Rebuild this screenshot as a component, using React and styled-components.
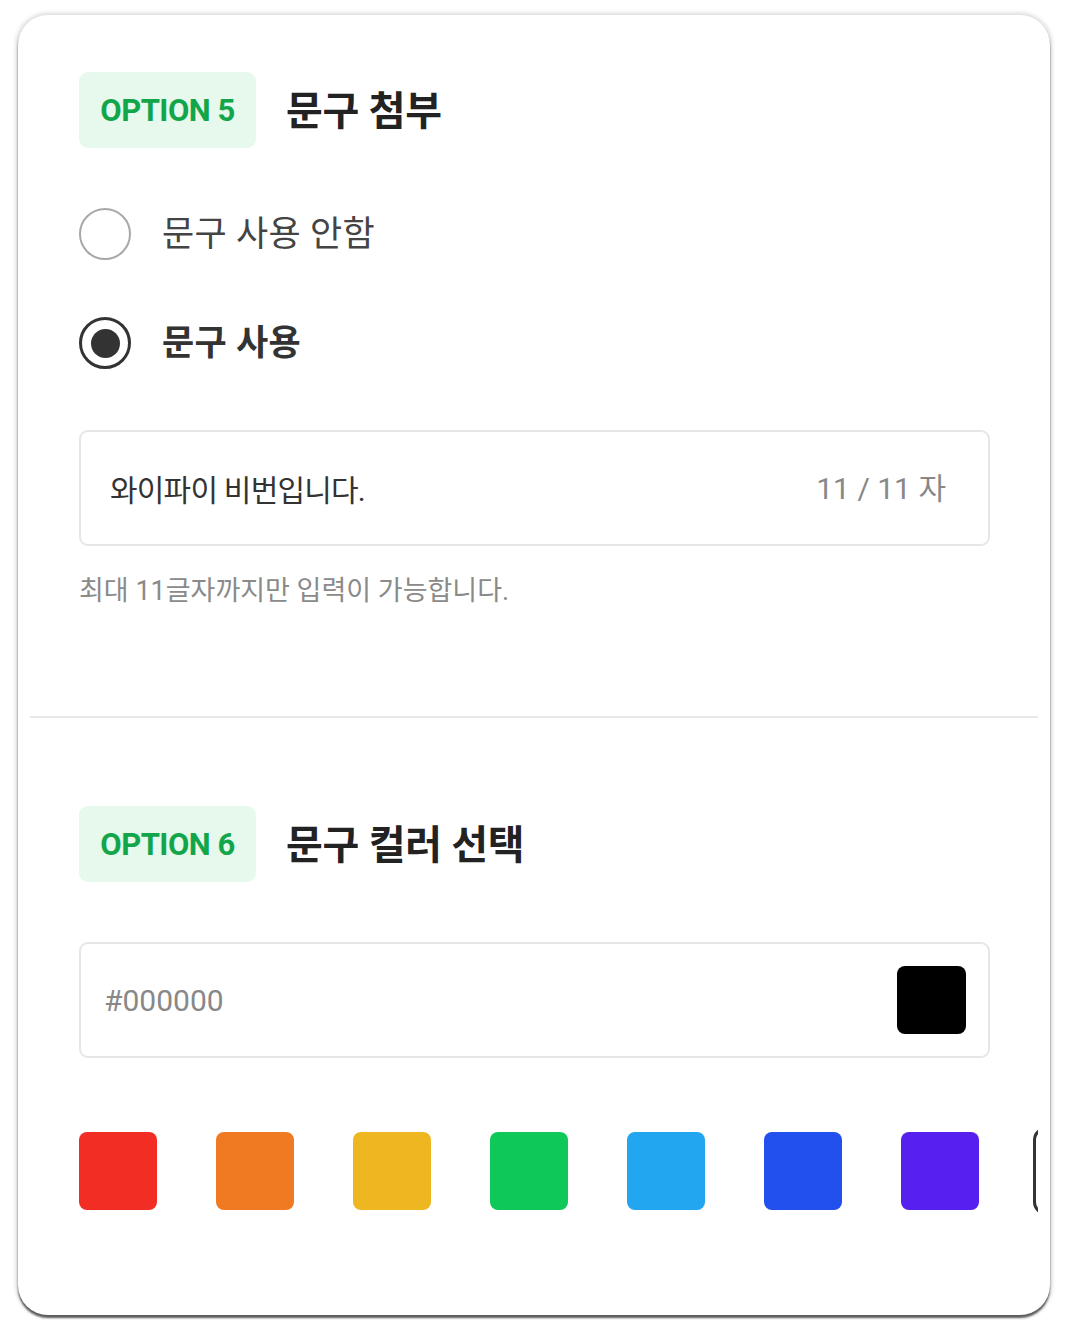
import React, { useState } from "react";
import styled, { createGlobalStyle } from "styled-components";

const GlobalStyle = createGlobalStyle`
  body {
    margin: 0;
    background: #ffffff;
    font-family: Roboto, "Noto Sans CJK KR", sans-serif;
  }
`;

const COLORS = ["#f22d24", "#f07a22", "#eeb722", "#0fc85a", "#22a6f0", "#2150ee", "#5720ee", "#000000"];
const MAX_LEN = 11;

const App = () => {
  const [useText, setUseText] = useState(true);
  const [text, setText] = useState("와이파이 비번입니다.");
  const [color, setColor] = useState("#000000");

  return (
    <Page>
      <GlobalStyle />
      <Card>
        <Section $bottom={105}>
          <Header>
            <Badge>OPTION 5</Badge>
            <Title>문구 첨부</Title>
          </Header>

          <RadioList>
            <RadioRow onClick={() => setUseText(false)}>
              <Radio $checked={!useText} />
              <RadioLabel $checked={!useText}>문구 사용 안함</RadioLabel>
            </RadioRow>
            <RadioRow onClick={() => setUseText(true)}>
              <Radio $checked={useText} />
              <RadioLabel $checked={useText}>문구 사용</RadioLabel>
            </RadioRow>
          </RadioList>

          <InputBox>
            <TextInput
              value={text}
              maxLength={MAX_LEN}
              onChange={(e) => setText(e.target.value)}
            />
            <Counter>
              {text.length} / {MAX_LEN} 자
            </Counter>
          </InputBox>
          <Help>최대 11글자까지만 입력이 가능합니다.</Help>
        </Section>

        <Divider />

        <Section $top={88}>
          <Header>
            <Badge>OPTION 6</Badge>
            <Title>문구 컬러 선택</Title>
          </Header>

          <ColorBox>
            <HexText>{color}</HexText>
            <Preview $color={color} />
          </ColorBox>

          <SwatchRow>
            {COLORS.map((c) => (
              <Swatch
                key={c}
                $color={c}
                $selected={c === color}
                onClick={() => setColor(c)}
              />
            ))}
          </SwatchRow>
        </Section>
      </Card>
    </Page>
  );
};

// Styled Components
const Page = styled.div`
  padding: 15px 18px 20px;
`;

const Card = styled.div`
  width: 1032px;
  height: 1300px;
  box-sizing: border-box;
  padding: 0 12px;
  background: #ffffff;
  border-radius: 30px;
  box-shadow: 0 3px 2px rgba(0, 0, 0, 0.6), 0 0 4px 2px rgba(0, 0, 0, 0.15);
  overflow: hidden;
`;

const Section = styled.div`
  padding: ${(p) => p.$top || 57}px 48px ${(p) => p.$bottom || 0}px 49px;
`;

const Header = styled.div`
  display: flex;
  align-items: center;
`;

const Badge = styled.div`
  width: 177px;
  height: 76px;
  display: flex;
  align-items: center;
  justify-content: center;
  background: #e7f8ed;
  border-radius: 9px;
  color: #12a64a;
  font-size: 31px;
  font-weight: 700;
  letter-spacing: -0.5px;
`;

const Title = styled.h2`
  margin: -4px 0 0 30px;
  font-size: 40px;
  font-weight: 700;
  letter-spacing: -0.3px;
  color: #222222;
`;

const RadioList = styled.div`
  display: flex;
  flex-direction: column;
  gap: 57px;
  margin-top: 60px;
`;

const RadioRow = styled.label`
  display: flex;
  align-items: center;
  height: 52px;
  cursor: pointer;
`;

const Radio = styled.span`
  width: 52px;
  height: 52px;
  box-sizing: border-box;
  border-radius: 50%;
  border: ${(p) => (p.$checked ? "3px solid #333333" : "2px solid #a8a8a8")};
  display: flex;
  align-items: center;
  justify-content: center;

  &::after {
    content: "";
    width: 29px;
    height: 29px;
    border-radius: 50%;
    background: #333333;
    display: ${(p) => (p.$checked ? "block" : "none")};
  }
`;

const RadioLabel = styled.span`
  margin: -8px 0 0 31px;
  font-size: 35px;
  letter-spacing: 0.3px;
  font-weight: ${(p) => (p.$checked ? 700 : 400)};
  color: ${(p) => (p.$checked ? "#333333" : "#444444")};
`;

const InputBox = styled.div`
  margin-top: 61px;
  height: 116px;
  box-sizing: border-box;
  border: 2px solid #e6e6e6;
  border-radius: 9px;
  display: flex;
  align-items: center;
  padding: 0 42px 0 29px;
`;

const TextInput = styled.input`
  flex: 1;
  min-width: 0;
  border: none;
  outline: none;
  background: transparent;
  font-family: inherit;
  font-size: 30px;
  letter-spacing: -0.8px;
  color: #333333;
  padding: 0;
`;

const Counter = styled.span`
  margin-top: -4px;
  font-size: 30px;
  color: #888888;
  white-space: nowrap;
`;

const Help = styled.p`
  margin: 25px 0 0;
  line-height: 40px;
  font-size: 27px;
  letter-spacing: 0;
  color: #8a8a8a;
`;

const Divider = styled.hr`
  margin: 0;
  border: none;
  height: 2px;
  background: #e8e8e8;
`;

const ColorBox = styled.div`
  margin-top: 60px;
  height: 116px;
  box-sizing: border-box;
  border: 2px solid #e6e6e6;
  border-radius: 9px;
  display: flex;
  align-items: center;
  justify-content: space-between;
  padding: 0 22px 0 23px;
`;

const HexText = styled.span`
  font-size: 30px;
  color: #888888;
`;

const Preview = styled.div`
  width: 69px;
  height: 68px;
  border-radius: 8px;
  background: ${(p) => p.$color};
`;

const SwatchRow = styled.div`
  display: flex;
  gap: 59px;
  margin: 68px -48px 0 0;
  padding: 6px 0;
  overflow: hidden;
`;

const Swatch = styled.button`
  flex: 0 0 78px;
  height: 78px;
  border: none;
  padding: 0;
  border-radius: 8px;
  background: ${(p) => p.$color};
  cursor: pointer;
  outline: ${(p) => (p.$selected ? "3px solid #333333" : "none")};
  outline-offset: 2px;
`;

export default App;
